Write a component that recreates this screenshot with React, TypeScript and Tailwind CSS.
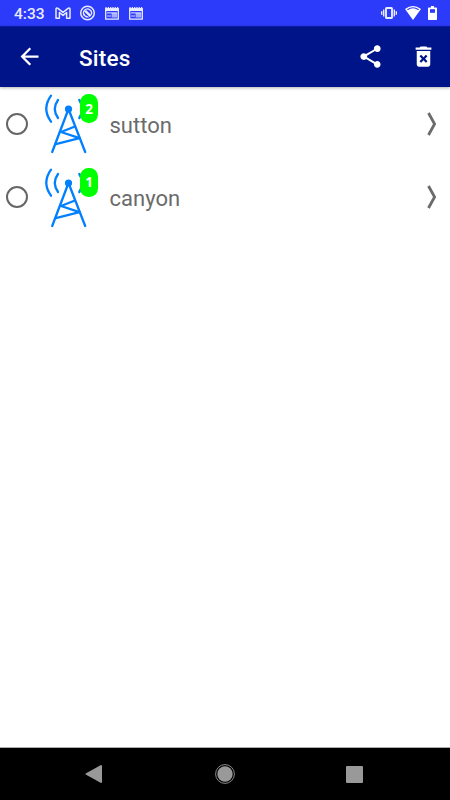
import { MdArrowBack, MdDeleteForever, MdShare } from "react-icons/md";

type Site = {
  name: string;
  count: number;
};

const sites: Site[] = [
  { name: "sutton", count: 2 },
  { name: "canyon", count: 1 },
];

const App = () => (
  <div className="flex h-[800px] w-[450px] flex-col overflow-hidden bg-white font-['Roboto',sans-serif]">
    <StatusBar />
    <header className="z-10 flex h-[61px] shrink-0 items-center border-t border-[#0c18a0] bg-[#001489] pb-[2px] text-white shadow-[0_1px_3px_rgba(0,0,0,0.3)]">
      <button className="ml-4 flex" aria-label="Back">
        <MdArrowBack className="size-[27px]" />
      </button>
      <h1 className="ml-[36px] pt-[3px] text-[22.5px] leading-7 font-medium tracking-[0.2px]">Sites</h1>
      <div className="mr-[13px] ml-auto flex gap-[26px]">
        <button aria-label="Share">
          <MdShare className="size-[27px]" />
        </button>
        <button aria-label="Delete">
          <MdDeleteForever className="size-[27px]" />
        </button>
      </div>
    </header>
    <main className="flex-1">
      {sites.map((site) => (
        <SiteRow key={site.name} site={site} />
      ))}
    </main>
    <NavBar />
  </div>
);

const StatusBar = () => (
  <div className="flex h-[26px] shrink-0 items-center bg-[#2c3afa] pr-[13px] pl-[14px] text-[#e9ebff]">
    <span className="w-[41px] pt-px text-[15.5px] leading-[26px] font-medium">4:33</span>
    {/* mail */}
    <svg className="h-[26px] w-4" viewBox="0 0 16 26" fill="none" stroke="currentColor" strokeWidth="1.5" strokeLinejoin="round">
      <path d="M1 18.3V9.1Q1 7.6 2.6 8.1L8 12.4L13.4 8.1Q15 7.6 15 9.1V18.3H11.6V12.5L8 15.4L4.4 12.5V18.3Z" />
    </svg>
    {/* sync */}
    <svg className="ml-2 h-[26px] w-[17px]" viewBox="0 0 17 26" fill="none" stroke="currentColor">
      <circle cx="8.5" cy="13" r="6.8" strokeWidth="1.5" />
      <path d="M5.3 15.4A4 4 0 1 1 12.1 14.8" strokeWidth="1.3" />
      <path d="M6.2 10.9L11.6 16.2" strokeWidth="2.4" />
      <path d="M4.8 14A3.9 3.9 0 0 0 9.5 16.8" strokeWidth="1.3" />
    </svg>
    <NewsIcon className="ml-[8px] h-[26px] w-4" />
    <NewsIcon className="ml-[8px] h-[26px] w-4" />
    {/* vibrate */}
    <svg className="ml-auto h-[26px] w-4" viewBox="0 0 16 26" fill="none" stroke="currentColor">
      <rect x="5" y="8" width="6" height="10" rx="0.6" strokeWidth="1.9" />
      <path d="M2.7 9.5V16.5M13.3 9.5V16.5M0.7 11.3V14.7M15.3 11.3V14.7" strokeWidth="1.4" />
    </svg>
    {/* wifi */}
    <svg className="ml-2 h-[26px] w-4" viewBox="0 0 16 26" fill="none">
      <path d="M0 9Q8 2.8 16 9L8 20Z" fill="white" />
      <path d="M2.4 9.7Q8 5.9 13.6 9.7" stroke="#2c3afa" strokeWidth="1.1" />
    </svg>
    {/* battery */}
    <svg className="ml-[7px] h-[26px] w-[9px]" viewBox="0 0 9 26">
      <path d="M3 6H6V7.5H8.2Q9 7.5 9 8.3V19.2Q9 20 8.2 20H0.8Q0 20 0 19.2V8.3Q0 7.5 0.8 7.5H3Z" fill="white" />
      <rect x="2" y="9.2" width="5" height="3.6" fill="#2c3afa" />
    </svg>
  </div>
);

const NewsIcon = ({ className }: { className: string }) => (
  <svg className={className} viewBox="0 0 16 26" fill="none" stroke="currentColor">
    <path d="M1.5 7.5H14.5" strokeWidth="1" strokeDasharray="1.2 1.1" />
    <rect x="1.7" y="8.7" width="12.6" height="10.4" strokeWidth="1.3" />
    <path d="M1.5 9.7H14.5" strokeWidth="2.6" />
    <path d="M3 12.9H13" strokeWidth="1" />
    <path d="M3 16H7" strokeWidth="0.9" />
    <rect x="7.6" y="13" width="5.6" height="4.5" fill="currentColor" fillOpacity="0.65" stroke="none" />
  </svg>
);

const SiteRow = ({ site }: { site: Site }) => (
  <div className="flex h-[73.5px] items-center text-[#6b6b6b]">
    <span className="ml-[6px] size-[22px] rounded-full border-2 border-[#666]" />
    <div className="relative ml-[12px] h-full w-[60px]">
      <TowerIcon />
      <span className="absolute top-[7px] left-[40px] flex h-[29px] w-[18px] items-center justify-center rounded-[8.5px] bg-[#00ff00] pt-px font-['Open_Sans',sans-serif] text-[13.5px] font-bold text-white">
        {site.count}
      </span>
    </div>
    <span className="ml-[9.5px] pt-[4px] text-[22px] leading-7">{site.name}</span>
    <svg className="mr-[13px] ml-auto h-[26px] w-[10px]" viewBox="0 0 10 26" fill="none" stroke="currentColor" strokeWidth="2.8">
      <path d="M1.5 2L7.6 13L1.5 24" />
    </svg>
  </div>
);

const TowerIcon = () => (
  <svg className="h-[73px] w-[60px]" viewBox="0 0 60 73" fill="none" stroke="#0080ff" strokeWidth="2.3" strokeLinecap="round" strokeLinejoin="round">
    <circle cx="28.5" cy="22" r="3.6" fill="#0080ff" stroke="none" />
    <path d="M12.2 65L28.5 22L45.2 65" />
    <path d="M34.3 39.7L21 45L39.5 51.2L15.8 57.2" />
    <path d="M11 8.7Q1.6 21.7 11 34.7M18 13Q11.6 22 18 31" />
    <path d="M39.3 13Q45.4 22 39.3 31" />
  </svg>
);

const NavBar = () => (
  <nav className="flex h-[53px] shrink-0 items-center justify-between border-t border-[#aaa] bg-black pr-[87px] pl-[85px] text-[#999]">
    <svg className="size-[18px]" viewBox="0 0 18 18" fill="currentColor">
      <path d="M0.7 8.5Q0.2 9 0.7 9.5L16 18Q17 18 17 17V1Q17 0 16 0Z" />
    </svg>
    <svg className="size-5" viewBox="0 0 20 20" fill="currentColor">
      <circle cx="10" cy="10" r="7.7" />
      <circle cx="10" cy="10" r="9.4" fill="none" stroke="currentColor" strokeWidth="0.9" />
    </svg>
    <span className="size-[17px] rounded-[1px] bg-[#999]" />
  </nav>
);

export default App;
